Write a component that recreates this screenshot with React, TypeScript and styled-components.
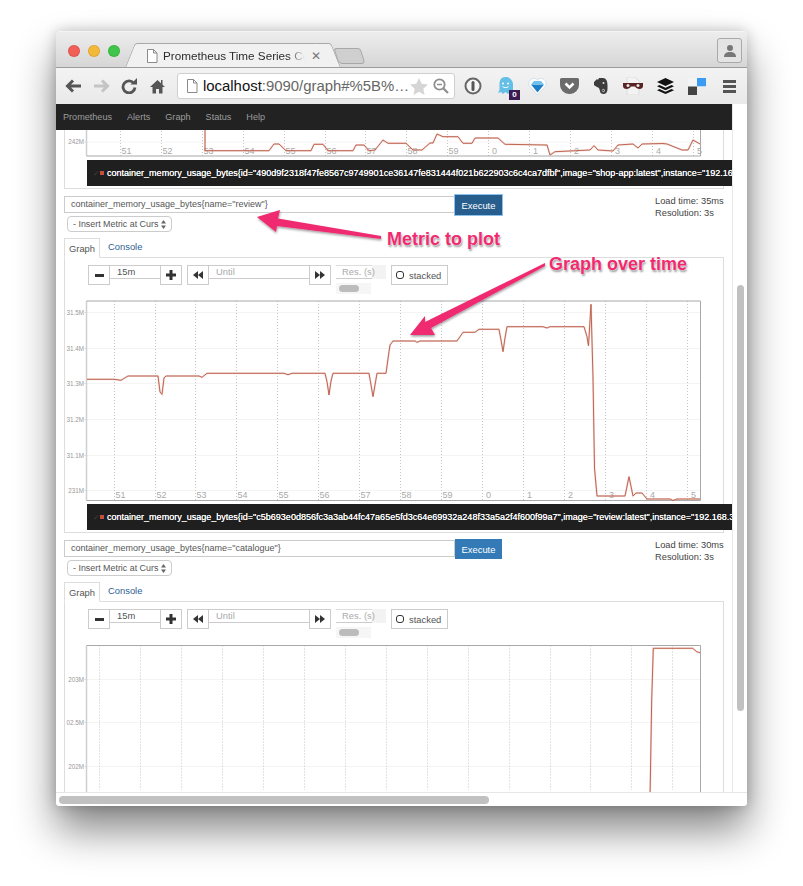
import React from "react";
import styled, { createGlobalStyle } from "styled-components";

const Global = createGlobalStyle`
  html, body { margin: 0; padding: 0; background: #fff; }
  body { font-family: "Liberation Sans", Arial, sans-serif; }
  * { box-sizing: border-box; }
`;

const Page = styled.div`
  position: relative;
  width: 803px;
  height: 886px;
  overflow: hidden;
  padding: 31px 56px 0;
  background: #fff;
`;
const Win = styled.div`
  width: 691px;
  height: 775px;
  display: flex;
  flex-direction: column;
  border-radius: 5px 5px 4px 4px;
  overflow: hidden;
  background: #fff;
`;
const WinShadow = styled.div`
  width: 691px;
  height: 775px;
  border-radius: 5px 5px 4px 4px;
  box-shadow: 0 24px 42px rgba(0, 0, 0, 0.48), 0 0 14px rgba(0, 0, 0, 0.22);
`;
const TitleBar = styled.div`
  height: 36px;
  flex: none;
  display: flex;
  align-items: flex-end;
  padding: 0 5px 0 12px;
  background: linear-gradient(#ededed, #d6d6d6);
  border-top: 1px solid #f4f4f4;
`;
const Lights = styled.div`
  display: flex;
  gap: 8px;
  align-self: flex-start;
  margin-top: 13px;
`;
const Light = styled.span<{ $c: string }>`
  width: 12px;
  height: 12px;
  border-radius: 50%;
  background: ${(p) => p.$c};
  box-shadow: inset 0 0 0 1px rgba(0, 0, 0, 0.1);
`;
const Tab = styled.div`
  position: relative;
  width: 194px;
  height: 24px;
  margin-left: 16px;
  display: flex;
  align-items: center;
  padding-left: 10px;
  gap: 5px;
  background: #f1f1f1;
  border-top: 1px solid #a9a9a9;
  border-radius: 3px 3px 0 0;
  &::before, &::after {
    content: "";
    position: absolute;
    top: -1px;
    bottom: 0;
    width: 14px;
    background: #f1f1f1;
    border-top: 1px solid #a9a9a9;
  }
  &::before { left: -6px; transform: skewX(-22deg); border-left: 1px solid #a9a9a9; border-radius: 3px 0 0 0; }
  &::after { right: -6px; transform: skewX(22deg); border-right: 1px solid #a9a9a9; border-radius: 0 3px 0 0; }
`;
const TabTitle = styled.span`
  position: relative;
  z-index: 1;
  width: 142px;
  white-space: nowrap;
  font-size: 11.7px;
  color: #2c2c2c;
  -webkit-mask-image: linear-gradient(90deg, #000 88%, transparent 100%);
  mask-image: linear-gradient(90deg, #000 88%, transparent 100%);
`;
const TabClose = styled.span`
  position: relative;
  z-index: 1;
  font-size: 12px;
  color: #777;
  margin-left: 1px;
`;
const NewTab = styled.div`
  width: 27px;
  height: 16px;
  margin: 0 0 3px 6px;
  border: 1px solid #a8a8a8;
  border-radius: 3px 3px 4px 4px;
  background: #cfcfcf;
  transform: skewX(18deg);
`;
const Profile = styled.div`
  width: 25px;
  height: 25px;
  margin: 6px 0 4px auto;
  align-self: flex-start;
  border: 1px solid #a9a9a9;
  border-radius: 3px;
  display: flex;
  align-items: center;
  justify-content: center;
  background: #e4e4e4;
`;
const Toolbar = styled.div`
  height: 37px;
  flex: none;
  display: flex;
  align-items: center;
  padding-left: 3px;
  background: linear-gradient(#f3f3f3, #e9e9e9);
  border-top: 1px solid #9c9c9c;
`;
const NavSlot = styled.div`
  width: 28px;
  height: 28px;
  display: flex;
  align-items: center;
  justify-content: center;
`;
const UrlBox = styled.div`
  width: 278px;
  height: 26px;
  margin-left: 6px;
  display: flex;
  align-items: center;
  padding: 0 5px 0 8px;
  background: #fff;
  border: 1px solid #cfcfcf;
  border-radius: 3px;
`;
const UrlText = styled.span`
  flex: 1;
  margin-left: 5px;
  font-size: 14.9px;
  color: #666;
  white-space: nowrap;
  b { font-weight: 400; color: #111; }
`;
const ExtRow = styled.div`
  display: flex;
  margin-left: 2px;
`;
const ExtSlot = styled.div`
  position: relative;
  width: 32px;
  height: 28px;
  display: flex;
  align-items: center;
  justify-content: center;
`;
const Badge = styled.span`
  position: absolute;
  right: 1px;
  bottom: 0;
  width: 11px;
  height: 10px;
  background: #3a1c52;
  color: #fff;
  font-size: 8px;
  font-weight: 700;
  line-height: 10px;
  text-align: center;
`;
const BodyRow = styled.div`
  flex: 1;
  min-height: 0;
  display: flex;
`;
const Viewport = styled.div`
  width: 676px;
  overflow: hidden;
`;
const VTrack = styled.div`
  flex: 1;
  padding: 181px 3px 0 4px;
  background: #fff;
  border-left: 1px solid #e9e9e9;
`;
const VThumb = styled.div`
  height: 426px;
  border-radius: 4px;
  background: #c1c1c1;
`;
const HTrack = styled.div`
  height: 14px;
  flex: none;
  padding: 3px 258px 3px 3px;
  background: #fff;
  border-top: 1px solid #e6e6e6;
`;
const HThumb = styled.div`
  height: 8px;
  border-radius: 4px;
  background: #c1c1c1;
`;
const Navbar = styled.nav`
  height: 26px;
  display: flex;
  align-items: center;
  gap: 15px;
  padding-left: 7px;
  background: #222;
  font-size: 9.1px;
  color: #9d9d9d;
`;
const Content = styled.div`
  padding: 0 8px;
`;
const PanelBody = styled.div<{ $top?: boolean }>`
  border: 1px solid #ddd;
  border-top: ${(p) => (p.$top ? "none" : "1px solid #ddd")};
  padding-bottom: 2px;
`;
const Legend = styled.div<{ $gap: number }>`
  height: 26px;
  margin: ${(p) => p.$gap}px -9px 0 22px;
  padding-left: 6px;
  display: flex;
  align-items: center;
  white-space: nowrap;
  background: #1f1f1f;
  color: #fff;
  font-size: 9.02px;
`;
const LegendText = styled.span`
  text-shadow: 0 0 0.6px #fff;
`;
const LegendCheck = styled.span`
  width: 8px;
  font-size: 8px;
  color: #3f3f3f;
`;
const Swatch = styled.span`
  flex: none;
  width: 4px;
  height: 4px;
  margin-right: 3px;
  background: #c1503d;
`;
const Query = styled.section`
  margin-top: 6px;
  position: relative;
`;
const QueryRow = styled.div`
  display: flex;
  align-items: flex-start;
  height: 20px;
`;
const QueryInput = styled.div`
  width: 391px;
  height: 17px;
  margin-top: 1px;
  padding-left: 6px;
  border: 1px solid #ccc;
  font-size: 9px;
  line-height: 15px;
  color: #555;
  white-space: nowrap;
`;
const Execute = styled.button<{ $focus?: boolean }>`
  width: 47px;
  height: 20px;
  padding: 0;
  border: none;
  color: #fff;
  font-family: inherit;
  font-size: 9.4px;
  background: ${(p) => (p.$focus ? "#285e8e" : "#337ab7")};
  box-shadow: ${(p) => (p.$focus ? "0 0 0 1px #8dc0ea" : "none")};
`;
const Stats = styled.div`
  margin: 0 0 0 153px;
  font-size: 9.3px;
  line-height: 12px;
  color: #444;
  white-space: nowrap;
`;
const MetricSelect = styled.div`
  width: 105px;
  height: 16px;
  margin: 1px 0 0 3px;
  padding: 0 5px 0 5px;
  display: flex;
  align-items: center;
  justify-content: space-between;
  border: 1px solid #ccc;
  border-radius: 4px;
  font-size: 8.9px;
  color: #555;
`;
const SelectText = styled.span`
  white-space: nowrap;
`;
const TabRow = styled.div`
  display: flex;
  align-items: flex-end;
  height: 19px;
  margin-top: 6px;
  font-size: 9.4px;
`;
const TabOn = styled.div`
  position: relative;
  z-index: 1;
  width: 36px;
  height: 20px;
  margin-bottom: -1px;
  padding-top: 4px;
  text-align: center;
  border: 1px solid #ddd;
  border-bottom: 1px solid #fff;
  color: #555;
  background: #fff;
`;
const TabOff = styled.div`
  padding: 0 0 5px 8px;
  color: #2d6096;
`;
const Controls = styled.div`
  height: 40px;
  padding: 7px 0 0 23px;
  display: flex;
  align-items: flex-start;
`;
const CtlBtn = styled.div<{ $gap?: number }>`
  width: 22px;
  height: 20px;
  margin-left: ${(p) => p.$gap ?? 0}px;
  display: flex;
  align-items: center;
  justify-content: center;
  border: 1px solid #ccc;
  background: #fff;
`;
const CtlInput = styled.div<{ $w: number; $c: string }>`
  width: ${(p) => p.$w}px;
  height: 14px;
  padding-left: 7px;
  border: 1px solid #ccc;
  border-left: none;
  border-right: none;
  font-size: 9.4px;
  line-height: 11px;
  color: ${(p) => p.$c};
`;
const ResBlock = styled.div`
  position: relative;
  width: 50px;
  margin-left: 5px;
`;
const ResField = styled.div`
  height: 14px;
  width: 36px;
  padding-left: 6px;
  border-bottom: 1px solid #ccc;
  border-top: 1px solid #ddd;
  font-size: 9.4px;
  line-height: 11px;
  color: #aaa;
  white-space: nowrap;
  box-shadow: 14px 0 0 #f3f3f3;
`;
const SliderBed = styled.div`
  width: 35px;
  height: 11px;
  margin-top: 4px;
  padding: 2px 3px;
  background: #f6f6f6;
`;
const SliderPill = styled.div`
  width: 20px;
  height: 7px;
  border-radius: 4px;
  background: #bcbcbc;
`;
const Stacked = styled.div`
  width: 57px;
  height: 20px;
  margin-left: 5px;
  padding-left: 4px;
  display: flex;
  align-items: center;
  gap: 5px;
  border: 1px solid #ccc;
  font-size: 9.4px;
  color: #555;
`;
const StackBox = styled.span`
  width: 8px;
  height: 8px;
  border: 1.5px solid #333;
  border-radius: 3px;
`;
const PlotSvg = styled.svg`
  display: block;
`;
const Overlay = styled.svg`
  position: absolute;
  left: 0;
  top: 0;
  pointer-events: none;
`;
const Note = styled.span<{ $x: number; $y: number }>`
  position: absolute;
  left: ${(p) => p.$x}px;
  top: ${(p) => p.$y}px;
  font-size: 18px;
  font-weight: 700;
  color: #ef2a6e;
  white-space: nowrap;
  text-shadow: 0 0 1px #fff, 0 0 1px #fff, 1px 2px 2px rgba(0, 0, 0, 0.4);
`;

type Pt = [number, number];
const toPts = (p: Pt[]) => p.map(([x, y]) => `${x},${y}`).join(" ");

function Plot({ top, h, plotTop, plotBottom, gx, labels, labelY, yl, line, dotEnd }: {
  top: number; h: number; plotTop?: number; plotBottom?: number; gx: number[];
  labels?: [string, number][]; labelY?: number; yl: [string, number][]; line: Pt[]; dotEnd?: number;
}) {
  const L = 86.5, R = 700.5;
  const t = plotTop ?? top - 2;
  const b = plotBottom ?? top + h + 2;
  return (
    <PlotSvg width={637} height={h} viewBox={`65 ${top} 637 ${h}`}>
      {yl.map(([s, y]) => (
        <g key={s}>
          <line x1={L} x2={R} y1={y} y2={y} stroke="#f4f4f4" />
          <line x1={L - 2} x2={L} y1={y} y2={y} stroke="#ddd" />
          <text x={L - 2.5} y={y + 2.2} textAnchor="end" fontSize="6.3" fill="#999" fontFamily="Liberation Sans">{s}</text>
        </g>
      ))}
      {gx.map((x) => (
        <line key={x} x1={x} x2={x} y1={t} y2={dotEnd ?? b} stroke="#c4c4c4" strokeDasharray="1 2" />
      ))}
      <line x1={L} x2={L} y1={t} y2={b} stroke="#cfcfcf" strokeWidth="1.5" />
      {plotBottom !== undefined && <line x1={L} x2={R} y1={b} y2={b} stroke="#a8a8a8" />}
      {plotTop !== undefined && <line x1={L} x2={R} y1={t} y2={t} stroke="#a8a8a8" />}
      <line x1={R} x2={R} y1={t} y2={b} stroke="#a8a8a8" />
      {labels?.map(([s, x]) => (
        <text key={s} x={x} y={labelY} textAnchor="middle" fontSize="9" fill="#aaa" fontFamily="Liberation Sans">{s}</text>
      ))}
      <polyline points={toPts(line)} fill="none" stroke="#e3a99c" strokeOpacity=".4" strokeWidth="2" />
      <polyline points={toPts(line)} fill="none" stroke="#b85744" strokeWidth=".9" />
    </PlotSvg>
  );
}

const grid1 = [120.5, 161.5, 202.5, 243.5, 284.5, 325.5, 365.5, 406.5, 447.5, 488.5, 529.5, 570.5, 611.5, 652.5, 693.5];
const grid2 = [114.5, 155.5, 195.5, 236.5, 277.5, 318.5, 359.5, 400.5, 441.5, 482.5, 523.5, 564.5, 605.5, 646.5, 687.5];
const grid3 = [99.5, 140.5, 181.5, 222.5, 263.5, 304.5, 345.5, 386.5, 427.5, 468.5, 509.5, 550.5, 590.5, 631.5, 672.5];
const names = ["51", "52", "53", "54", "55", "56", "57", "58", "59", "0", "1", "2", "3", "4", "5"];

const line1: Pt[] = [[205, 128], [205, 150.7], [269, 150.7], [274, 144], [279, 144], [286, 150.7], [311, 150.7], [314, 144.3], [323, 144.3], [328, 150.7], [353, 150.7], [356, 145], [364, 145], [369, 150.7], [375, 150], [383, 140], [388, 143.3], [406, 143.3], [413, 150], [422, 150], [430, 143], [433, 143], [437, 134], [443, 136.7], [458, 136.7], [463, 143.3], [472, 143.3], [475, 138], [498, 138], [505, 144.3], [547, 145], [550, 155], [555, 151.7], [590, 150], [594, 145.7], [598, 150], [613, 151], [618, 145], [633, 144], [638, 148], [642, 144], [663, 143.5], [667, 144], [682, 150], [688, 150], [693, 140], [700, 144]];
const line2: Pt[] = [[87, 379.3], [114, 379.3], [121, 380.3], [128, 376], [158, 376], [160, 392], [162, 394.3], [164, 378], [166, 376], [199, 376], [202, 377.3], [207, 373.3], [284, 373.3], [288, 374.7], [292, 373.3], [325, 373.3], [327, 381.7], [329, 395], [331, 381], [333, 373.3], [369, 373.3], [371, 385], [373, 396.7], [375, 385], [377, 373.3], [386, 373.3], [389, 351.7], [390, 345], [393, 341], [415, 341], [417, 342.3], [420, 341], [457, 341], [463, 332.3], [475, 332.3], [479, 329.3], [499, 329.3], [501, 340], [503, 351.7], [505, 338], [507, 326.7], [543, 326.7], [547, 328], [550, 326.7], [584, 326.7], [587, 336.7], [588.5, 345.7], [591, 304.3], [593, 378], [594.5, 468], [597, 496], [625, 496], [629, 476.7], [633, 496], [636, 493], [642, 493], [647, 499], [670, 499], [673, 500.5], [677, 499], [700, 499]];
const line3: Pt[] = [[650, 800], [651.7, 700], [653.3, 648.3], [692.7, 648.3], [696.7, 651.7], [700, 652.7]];

function Minus() { return <svg width="9" height="9" viewBox="0 0 9 9"><rect x="0" y="3" width="9" height="3" fill="#333" /></svg>; }
function Plus() { return <svg width="10" height="10" viewBox="0 0 10 10"><path d="M3.5 0h3v3.5H10v3H6.5V10h-3V6.5H0v-3h3.5z" fill="#333" /></svg>; }
function Back() { return <svg width="10" height="8" viewBox="0 0 10 8"><path d="M5 0v8L0 4zM10 0v8L5 4z" fill="#333" /></svg>; }
function Fwd() { return <svg width="10" height="8" viewBox="0 0 10 8"><path d="M0 0v8l5-4zM5 0v8l5-4z" fill="#333" /></svg>; }
const DocSvg = styled.svg`
  position: relative;
  z-index: 1;
  flex: none;
`;
function Doc() { return <DocSvg width="12" height="14" viewBox="0 0 12 14"><path d="M1.5.5h6l3.5 3.5v9.500h-9.500z M7.500.5v3.500h3.500" fill="#fff" stroke="#8a8a8a" /></DocSvg>; }
const GlassSvg = styled.svg`
  margin-left: 5px;
  flex: none;
`;

function Graph({ name, legend, load, focus, children }: {
  name: string; legend?: string; load: string; focus?: boolean; children: React.ReactNode;
}) {
  return (
    <Query>
      <QueryRow>
        <QueryInput>{`container_memory_usage_bytes{name="${name}"}`}</QueryInput>
        <Execute $focus={focus}>Execute</Execute>
        <Stats>Load time: {load}<br />Resolution: 3s</Stats>
      </QueryRow>
      <MetricSelect>
        <SelectText>- Insert Metric at Curs</SelectText>
        <svg width="5" height="9" viewBox="0 0 5 9"><path d="M0 3.500L2.500 0 5 3.500zM0 5.500L2.500 9 5 5.500z" fill="#666" /></svg>
      </MetricSelect>
      <TabRow><TabOn>Graph</TabOn><TabOff>Console</TabOff></TabRow>
      <PanelBody>
        <Controls>
          <CtlBtn><Minus /></CtlBtn>
          <CtlInput $w={50} $c="#555">15m</CtlInput>
          <CtlBtn><Plus /></CtlBtn>
          <CtlBtn $gap={5}><Back /></CtlBtn>
          <CtlInput $w={100} $c="#aaa">Until</CtlInput>
          <CtlBtn><Fwd /></CtlBtn>
          <ResBlock>
            <ResField>Res. (s)</ResField>
            <SliderBed><SliderPill /></SliderBed>
          </ResBlock>
          <Stacked><StackBox />stacked</Stacked>
        </Controls>
        {children}
        {legend && (
          <Legend $gap={2}>
            <LegendCheck>✓</LegendCheck><Swatch />
            <LegendText>{legend}</LegendText>
          </Legend>
        )}
      </PanelBody>
    </Query>
  );
}

export default function App() {
  return (
    <Page>
      <Global />
      <WinShadow>
        <Win>
          <TitleBar>
            <Lights>
              <Light $c="#f25f57" /><Light $c="#f5b93a" /><Light $c="#3fc64a" />
            </Lights>
            <Tab>
              <Doc />
              <TabTitle>Prometheus Time Series Co</TabTitle>
              <TabClose>✕</TabClose>
            </Tab>
            <NewTab />
            <Profile>
              <svg width="14" height="14" viewBox="0 0 14 14"><circle cx="7" cy="4" r="3" fill="#777" /><path d="M1 13c0-4 3-5 6-5s6 1 6 5z" fill="#777" /></svg>
            </Profile>
          </TitleBar>
          <Toolbar>
            <NavSlot><svg width="17" height="14" viewBox="0 0 17 14"><path d="M16 7H3M8 1.500L2.500 7 8 12.500" fill="none" stroke="#555" strokeWidth="3" /></svg></NavSlot>
            <NavSlot><svg width="17" height="14" viewBox="0 0 17 14"><path d="M1 7h13M9 1.500L14.500 7 9 12.500" fill="none" stroke="#c4c4c4" strokeWidth="3" /></svg></NavSlot>
            <NavSlot><svg width="16" height="16" viewBox="0 0 16 16"><path d="M13 5.500A6 6 0 1 0 14 9.500" fill="none" stroke="#555" strokeWidth="2.800" /><path d="M9.500 6.500H16V0z" fill="#555" /></svg></NavSlot>
            <NavSlot><svg width="15" height="15" viewBox="0 0 15 15"><path d="M7.500 1L0 8h2.500v6.500h3.500v-4.500h3v4.500h3.500V8H15l-2.500-2.300V1H11v3.200z" fill="#555" /></svg></NavSlot>
            <UrlBox>
              <Doc />
              <UrlText><b>localhost</b>:9090/graph#%5B%…</UrlText>
              <svg width="18" height="17" viewBox="0 0 18 17"><path d="M9 0l2.700 5.800 6.300.7-4.700 4.200 1.300 6.300L9 13.800 3.400 17l1.300-6.300L0 6.500l6.300-.7z" fill="#d5d5d5" /></svg>
              <GlassSvg width="16" height="16" viewBox="0 0 16 16"><circle cx="6.500" cy="6.500" r="5.200" fill="none" stroke="#8e8e8e" strokeWidth="1.800" /><path d="M4 6.500h5" stroke="#8e8e8e" strokeWidth="1.500" /><path d="M10.500 10.500L15 15" stroke="#8e8e8e" strokeWidth="2.200" /></GlassSvg>
            </UrlBox>
            <ExtRow>
              <ExtSlot><svg width="18" height="18" viewBox="0 0 18 18"><circle cx="9" cy="9" r="7.500" fill="#f5f5f5" stroke="#666" strokeWidth="2" /><rect x="7.500" y="4" width="3" height="10" rx="1.500" fill="#555" /></svg></ExtSlot>
              <ExtSlot>
                <svg width="15" height="18" viewBox="0 0 15 18"><path d="M7.500 0C3 0 1.500 3.500 1.500 7v6L0 16l3-1 2 2 2.500-2 2.500 2 2-2 3 1V7C15 3.500 12 0 7.500 0z" fill="#63bfe6" /><circle cx="5" cy="6.500" r="1" fill="#fff" /><circle cx="10" cy="6.500" r="1" fill="#fff" /><path d="M4.500 9.500c1.500 1.500 4.500 1.500 6 0" stroke="#fff" fill="none" /></svg>
                <Badge>0</Badge>
              </ExtSlot>
              <ExtSlot><svg width="19" height="19" viewBox="0 0 19 19"><path d="M9.500 18L1 8.500C0 4.500 3 1.500 6 1.500c1.500 0 2.700.6 3.500 1.800.8-1.200 2-1.800 3.500-1.800 3 0 6 3 5 7z" fill="#fff" stroke="#bcd4e6" strokeWidth=".6" /><path d="M9.500 15.500L3 7.500h13z" fill="#1e7fc6" /><path d="M3 7.500L6 4h7l3 3.500z" fill="#6fc0ee" /></svg></ExtSlot>
              <ExtSlot><svg width="19" height="16" viewBox="0 0 19 16"><path d="M1.500 0h16A1.500 1.500 0 0 1 19 1.500V7A9 9 0 0 1 10 16h-1A9 9 0 0 1 0 7V1.500A1.500 1.500 0 0 1 1.500 0z" fill="#6b6b6b" /><path d="M5.500 5.500l4 4 4-4" fill="none" stroke="#fff" strokeWidth="2.500" /></svg></ExtSlot>
              <ExtSlot><svg width="14" height="16" viewBox="0 0 14 16"><path d="M0 4L3 1l1 1 1-2h4c3 0 4.500 3 4.500 7v4c0 3-1.500 5-4 5-2 0-3.500-1-3.500-3l-1-3C3 9 1 8 0 7z" fill="#3d3d3d" /><path d="M8 12.500c.5-1.500 2.500-1.500 2.500 0s-1.500 1.500-2 1" fill="none" stroke="#ddd" /><circle cx="9.500" cy="5" r="1" fill="#ddd" /></svg></ExtSlot>
              <ExtSlot><svg width="20" height="18" viewBox="0 0 20 18"><path d="M4 0h8l4 4v14H4z" fill="#f3f3f3" stroke="#ddd" /><path d="M0 6h20v3c0 2-1.500 3-3.500 3-2 0-3.500-1-4.500-2.500H8C7 11 5.500 12 3.500 12 1.500 12 0 11 0 9z" fill="#5a2323" /><circle cx="5" cy="8.500" r="1.500" fill="#e8e8e8" /><circle cx="15" cy="8.500" r="1.500" fill="#e8e8e8" /></svg></ExtSlot>
              <ExtSlot><svg width="17" height="16" viewBox="0 0 17 16"><path d="M8.500 0l8.500 4-8.500 4L0 4z" fill="#111" /><path d="M2.500 7L8.500 9.800 14.500 7l2.500 1.200-8.500 4-8.500-4z" fill="#111" /><path d="M2.500 11L8.500 13.800 14.500 11 17 12.200l-8.500 3.800L0 12.200z" fill="#111" /></svg></ExtSlot>
              <ExtSlot><svg width="18" height="17" viewBox="0 0 18 17"><rect x="9" y="0" width="9" height="8.500" fill="#3a9bf2" /><rect x="0" y="0" width="9" height="8.500" fill="#f4f4f4" /><rect x="0" y="8.500" width="9" height="8.500" fill="#444" /><rect x="9" y="8.500" width="9" height="8.500" fill="#ededed" /></svg></ExtSlot>
              <ExtSlot><svg width="13" height="13" viewBox="0 0 13 13"><path d="M0 0h13v3H0zM0 5h13v3H0zM0 10h13v3H0z" fill="#555" /></svg></ExtSlot>
            </ExtRow>
          </Toolbar>
          <BodyRow>
            <Viewport>
              <Navbar>
                <span>Prometheus</span><span>Alerts</span><span>Graph</span><span>Status</span><span>Help</span>
              </Navbar>
              <Content>
                <PanelBody $top>
                  <Plot top={130} h={27} plotBottom={156} gx={grid1} labels={names.map((n, i) => [n, grid1[i] + 6] as [string, number])} labelY={154} yl={[["242M", 142]]} line={line1} />
                  <Legend $gap={3}>
                    <LegendCheck>✓</LegendCheck><Swatch />
                    <LegendText>{'container_memory_usage_bytes{id="490d9f2318f47fe8567c9749901ce36147fe831444f021b622903c6c4ca7dfbf",image="shop-app:latest",instance="192.16'}</LegendText>
                  </Legend>
                </PanelBody>
                <Graph
                  name="review" focus load="35ms"
                  legend={'container_memory_usage_bytes{id="c5b693e0d856fc3a3ab44fc47a65e5fd3c64e69932a248f33a5a2f4f600f99a7",image="review:latest",instance="192.168.3'}
                >
                  <Plot top={298} h={204} plotTop={301} plotBottom={500.5} gx={grid2} labels={names.map((n, i) => [n, grid2[i] + 6] as [string, number])} labelY={498} yl={[["31.5M", 312.5], ["31.4M", 348.5], ["31.3M", 383.5], ["31.2M", 419.5], ["31.1M", 455.5], ["231M", 490.5]]} line={line2} />
                </Graph>
                <Graph name="catalogue" load="30ms">
                  <Plot top={642} h={150} plotTop={645.5} gx={grid3} yl={[["203M", 679.5], ["02.5M", 722.5], ["202M", 766.5]]} line={line3} dotEnd={790} />
                </Graph>
              </Content>
            </Viewport>
            <VTrack><VThumb /></VTrack>
          </BodyRow>
          <HTrack><HThumb /></HTrack>
        </Win>
      </WinShadow>
      <Overlay width="803" height="886" viewBox="0 0 803 886">
        <defs>
          <filter id="as" x="-10%" y="-30%" width="120%" height="170%">
            <feDropShadow dx="0.5" dy="1.500" stdDeviation="1.200" floodColor="#000" floodOpacity=".4" />
          </filter>
        </defs>
        <polygon filter="url(#as)" fill="#f0296f" points="257,217 280,210 278,218.500 381,236 381,239 277,226 276,232" />
        <polygon filter="url(#as)" fill="#f0296f" points="410,335 425,316 425,322 545,263 545,266 431,328 435,335" />
      </Overlay>
      <Note $x={387} $y={229}>Metric to plot</Note>
      <Note $x={549} $y={254}>Graph over time</Note>
    </Page>
  );
}
